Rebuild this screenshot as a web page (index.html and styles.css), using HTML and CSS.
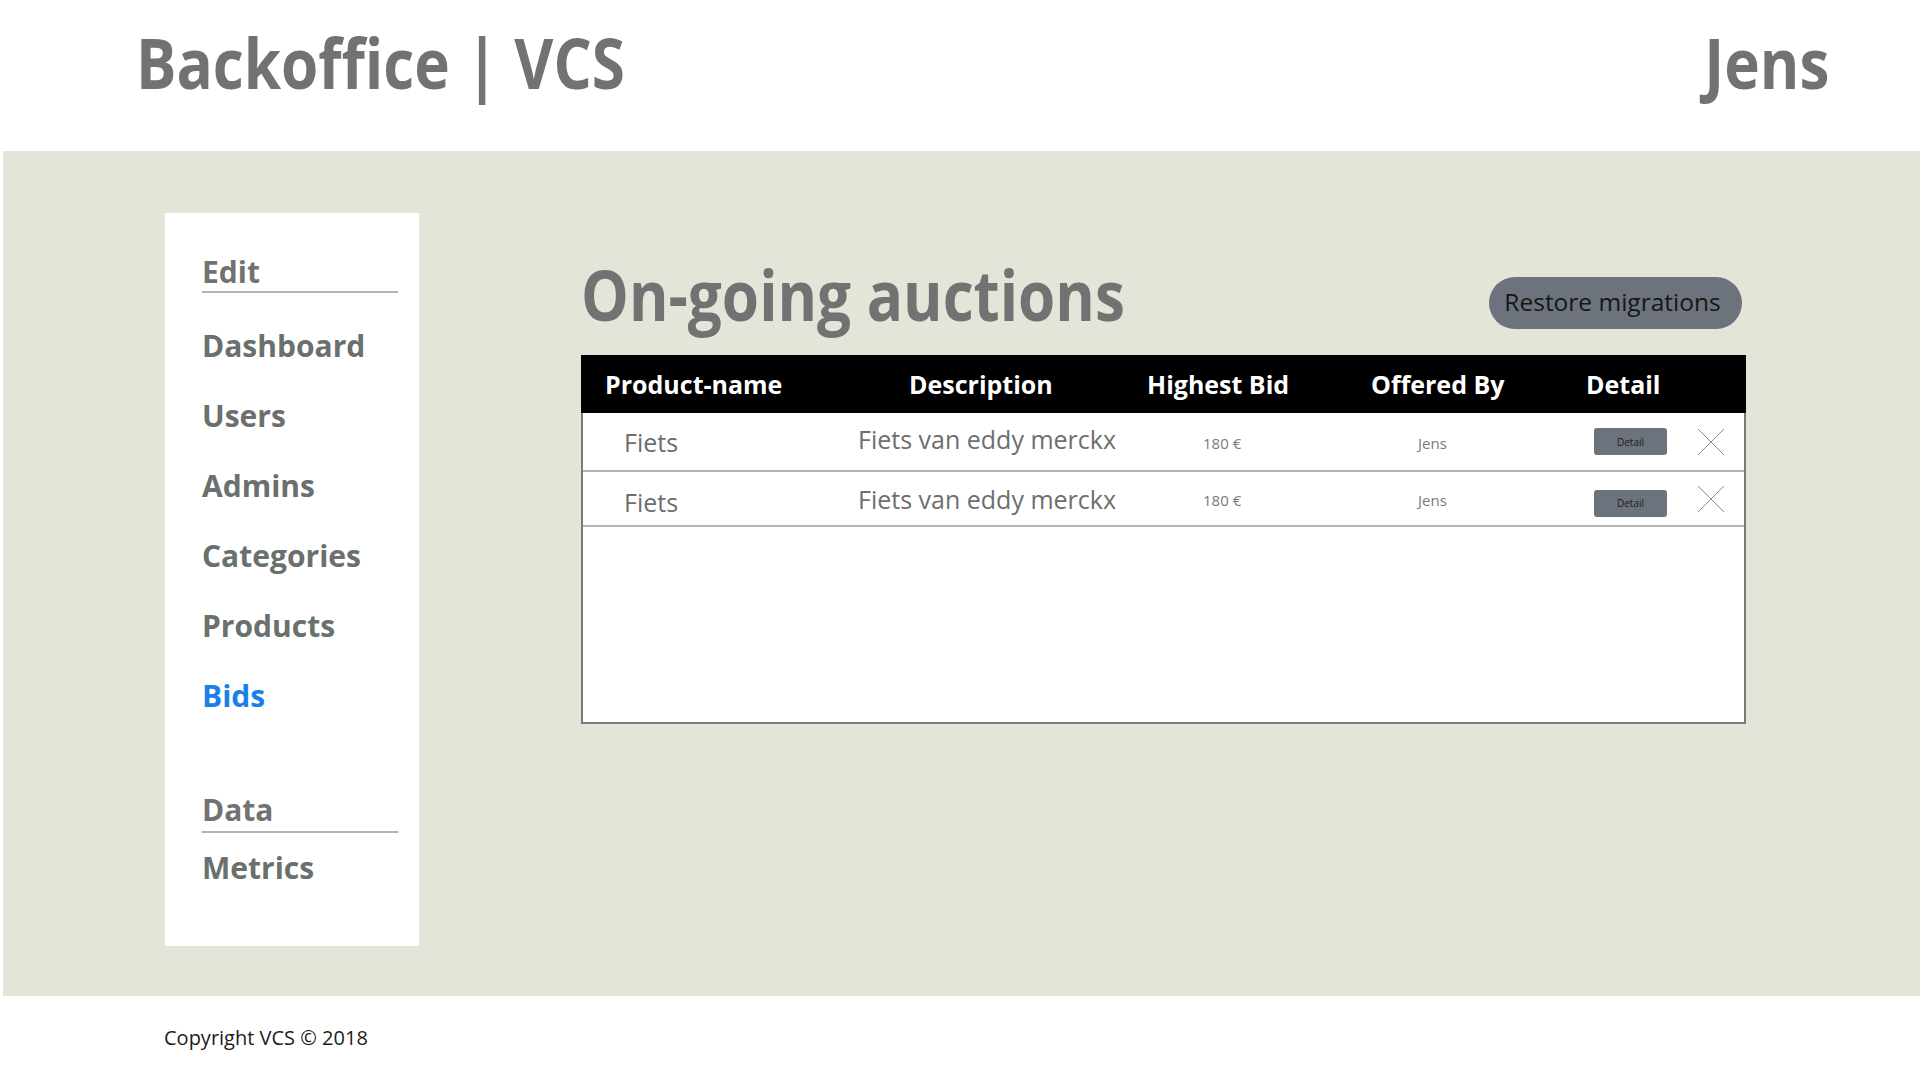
FILE: index.html
```html
<!DOCTYPE html>
<html lang="nl">
<head>
<meta charset="utf-8">
<title>Backoffice | VCS</title>
<link rel="stylesheet" href="styles.css">
</head>
<body>
<header class="topbar">
  <h1 class="brand">Backoffice | VCS</h1>
  <div class="user">Jens</div>
</header>
<section class="band">
  <nav class="sidebar">
    <div class="nav-heading">Edit</div>
    <ul class="nav-list">
      <li class="nav-item">Dashboard</li>
      <li class="nav-item">Users</li>
      <li class="nav-item">Admins</li>
      <li class="nav-item">Categories</li>
      <li class="nav-item">Products</li>
      <li class="nav-item active">Bids</li>
    </ul>
    <div class="nav-heading data">Data</div>
    <ul class="nav-list metrics">
      <li class="nav-item">Metrics</li>
    </ul>
  </nav>
  <main class="content">
    <div class="title-row">
      <h2 class="page-title">On-going auctions</h2>
      <button class="restore">Restore migrations</button>
    </div>
    <div class="table">
      <div class="thead">
        <div>Product-name</div>
        <div>Description</div>
        <div>Highest Bid</div>
        <div>Offered By</div>
        <div>Detail</div>
      </div>
      <div class="trow">
        <div class="c-name">Fiets</div>
        <div class="c-desc">Fiets van eddy merckx</div>
        <div class="c-small">180 €</div>
        <div class="c-small">Jens</div>
        <div><span class="detail-btn">Detail</span></div>
        <div class="c-x"><svg width="28" height="28" viewBox="0 0 28 28"><path d="M1 1 L27 27 M27 1 L1 27" stroke="#8c8c8c" stroke-width="1" fill="none"/></svg></div>
      </div>
      <div class="trow second">
        <div class="c-name">Fiets</div>
        <div class="c-desc">Fiets van eddy merckx</div>
        <div class="c-small">180 €</div>
        <div class="c-small">Jens</div>
        <div><span class="detail-btn">Detail</span></div>
        <div class="c-x"><svg width="28" height="28" viewBox="0 0 28 28"><path d="M1 1 L27 27 M27 1 L1 27" stroke="#8c8c8c" stroke-width="1" fill="none"/></svg></div>
      </div>
    </div>
  </main>
</section>
<footer class="footer">Copyright VCS © 2018</footer>
</body>
</html>
```
FILE: styles.css
```css
* { box-sizing: border-box; }
html, body { margin: 0; padding: 0; }
body {
  width: 1920px;
  height: 1080px;
  overflow: hidden;
  background: #ffffff;
  font-family: "Open Sans", "Liberation Sans", sans-serif;
}

.topbar {
  height: 151px;
  display: flex;
  justify-content: space-between;
  align-items: flex-start;
  padding: 22px 91px 0 136px;
}
.brand, .user {
  margin: 0;
  font-size: 70px;
  line-height: 80px;
  font-weight: 700;
  color: #727272;
  transform: scaleX(0.86);
}
.brand { transform-origin: left center; }
.user { transform-origin: right center; }

.band {
  margin-left: 3px;
  height: 845px;
  background: #e4e4d8;
  display: flex;
  align-items: flex-start;
  padding: 62px 0 0 162px;
}

.sidebar {
  width: 254px;
  height: 733px;
  background: #ffffff;
  padding: 40px 21px 0 37px;
}
.nav-heading {
  font-size: 30px;
  line-height: 38px;
  font-weight: 700;
  color: #727272;
  border-bottom: 2px solid #b4b4b4;
}
.nav-heading.data {
  margin-top: 76px;
  padding-bottom: 2px;
}
.nav-list {
  list-style: none;
  margin: 34px 0 0;
  padding: 0;
  display: flex;
  flex-direction: column;
  gap: 32px;
}
.nav-list.metrics { margin-top: 16px; }
.nav-item {
  font-size: 30px;
  line-height: 38px;
  font-weight: 700;
  color: #69706d;
}
.nav-item.active { color: #1a7fe8; }

.content {
  width: 1165px;
  margin-left: 162px;
  margin-top: 41px;
}
.title-row {
  display: flex;
  justify-content: space-between;
  align-items: flex-start;
}
.page-title {
  margin: 0;
  font-size: 70px;
  line-height: 80px;
  font-weight: 700;
  color: #727272;
  transform: scaleX(0.86);
  transform-origin: left center;
}
.restore {
  margin-top: 23px;
  margin-right: 4px;
  width: 253px;
  height: 52px;
  border: none;
  border-radius: 26px;
  background: #6c737c;
  color: #161616;
  font-family: "Open Sans", "Liberation Sans", sans-serif;
  font-size: 24.5px;
  padding: 0 6px 4px 0;
}

.table {
  margin-top: 21px;
  height: 369px;
  background: #ffffff;
  border: 2px solid #7a7a7a;
  border-top: none;
}
.thead {
  height: 58px;
  background: #000000;
  margin: 0 -2px;
  padding-left: 24px;
  display: grid;
  grid-template-columns: 304px 238px 224px 215px 1fr;
  align-items: center;
  color: #ffffff;
  font-size: 25px;
  font-weight: 700;
}
.trow {
  height: 59px;
  border-bottom: 2px solid #b5b5b5;
  padding-left: 41px;
  display: grid;
  grid-template-columns: 234px 345px 215px 176px 103px 1fr;
  align-items: center;
  color: #6e6e6e;
}
.trow.second {
  height: 55px;
}
.c-name, .c-desc {
  font-size: 25px;
}
.c-name { padding-top: 1px; }
.c-desc { padding-bottom: 6px; }
.second .c-name { padding-top: 6px; }
.second .c-desc { padding-bottom: 0; }
.c-small {
  font-size: 15px;
  font-stretch: 90%;
  color: #7a7a7a;
  padding-top: 2px;
}
.detail-btn {
  display: inline-flex;
  align-items: center;
  justify-content: center;
  width: 73px;
  height: 27px;
  border-radius: 3px;
  background: #6c737c;
  color: #1c1c1c;
  font-size: 10px;
}
.second .detail-btn { margin-top: 9px; }
.c-x { display: flex; align-items: center; }
.c-x svg { display: block; }

.footer {
  padding: 28px 0 0 164px;
  font-size: 20px;
  line-height: 27px;
  font-stretch: 92%;
  color: #1c1c1c;
}
```
